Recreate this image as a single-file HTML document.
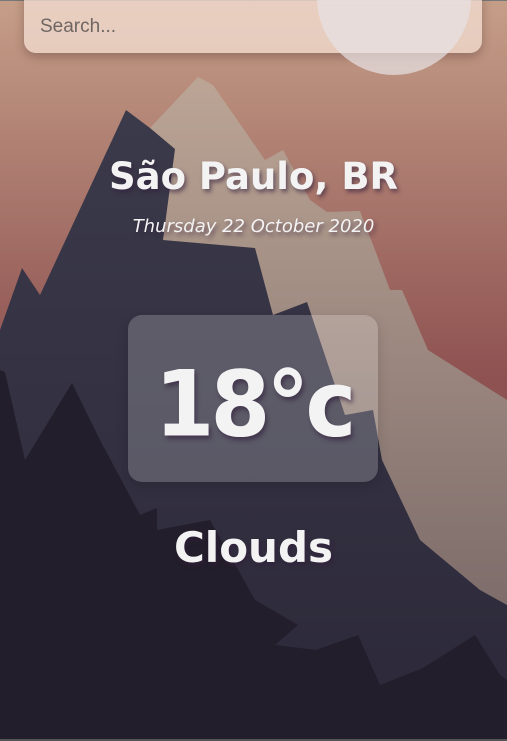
<!DOCTYPE html>
<html><head><meta charset="utf-8"><style>
html,body{margin:0;padding:0;width:507px;height:741px;overflow:hidden}
body{position:relative;font-family:"DejaVu Sans","Liberation Sans",sans-serif;background:#2d2a3b}
svg.bg{position:absolute;left:0;top:0}
.search{position:absolute;left:24px;top:-14px;width:458px;height:67px;border-radius:12px;background:rgba(242,220,207,0.78);box-shadow:0 4px 10px rgba(60,30,30,0.3)}
.search span{position:absolute;left:16px;top:30px;font-family:"Liberation Sans",sans-serif;font-size:19px;color:#6f6663}
.circle{position:absolute;left:317px;top:-79px;width:154px;height:154px;border-radius:50%;background:rgba(232,226,230,0.7)}
.t{position:absolute;left:0;width:507px;text-align:center;color:#f4f3f4;font-weight:bold;text-shadow:2px 3px 4px rgba(50,30,60,0.6)}
.box{position:absolute;left:128px;top:315px;width:250px;height:167px;border-radius:14px;background:rgba(255,255,255,0.2);box-shadow:0 4px 12px rgba(0,0,0,0.15)}
</style></head><body>
<svg class="bg" width="507" height="741" viewBox="0 0 507 741">
<defs>
<linearGradient id="sky" x1="0" y1="0" x2="0" y2="1"><stop offset="0" stop-color="#c59e88"/><stop offset="0.5" stop-color="#8f5352"/><stop offset="1" stop-color="#6a3a40"/></linearGradient>
<linearGradient id="lt" x1="0" y1="0" x2="0" y2="1"><stop offset="0" stop-color="#bca595"/><stop offset="1" stop-color="#6e5e60"/></linearGradient>
<linearGradient id="dk" x1="0" y1="0" x2="0" y2="1"><stop offset="0" stop-color="#3b3a4a"/><stop offset="1" stop-color="#2c2839"/></linearGradient>
</defs>
<rect width="507" height="741" fill="url(#sky)"/>
<polygon fill="url(#lt)" points="198,77 213,85 265,160 283,150 310,200 327,212 360,211 375,250 390,290 402,290 428,350 507,400 507,741 150,741 150,128"/>
<polygon fill="url(#dk)" points="126,110 150,128 175,149 163,240 255,248 273,315 307,302 345,415 373,410 382,460 420,540 480,590 507,605 507,741 0,741 0,330 22,268 40,295"/>
<polygon fill="#231e2b" points="0,370 5,372 25,460 72,383 100,440 140,515 157,508 157,530 210,520 255,600 298,625 275,645 316,650 358,635 380,685 423,668 475,635 500,675 507,680 507,741 0,741"/>
<rect x="0" y="0" width="507" height="1" fill="#777"/>
<rect x="0" y="739" width="507" height="2" fill="#555"/>
</svg>
<div class="search"><span>Search...</span></div>
<div class="circle"></div>
<div class="t" style="top:152px;font-size:37px;line-height:50px">São Paulo, BR</div>
<div class="t" style="top:215px;font-size:18px;font-style:italic;font-weight:normal;line-height:24px">Thursday 22 October 2020</div>
<div class="box"></div>
<div class="t" style="top:350px;font-size:86px;line-height:110px;letter-spacing:-4px;transform:scaleY(1.06)">18°c</div>
<div class="t" style="top:520px;font-size:42px;line-height:56px">Clouds</div>
</body></html>
